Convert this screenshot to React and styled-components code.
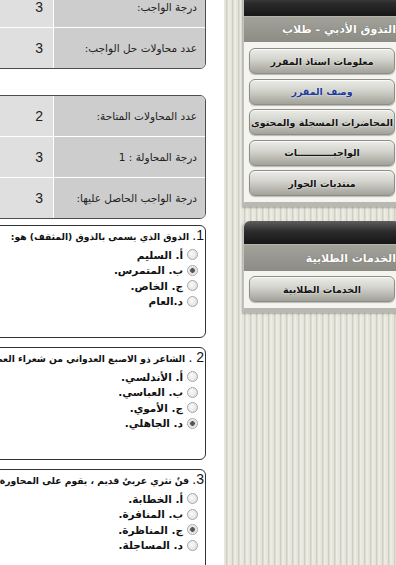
import React from "react";
import styled, { createGlobalStyle } from "styled-components";

const GlobalStyle = createGlobalStyle`
  html, body {
    margin: 0;
    padding: 0;
    background: #fff;
  }
  body {
    font-family: Tahoma, "DejaVu Sans", sans-serif;
  }
`;

const stats1 = [
  { label: "درجة الواجب:", value: "3" },
  { label: "عدد محاولات حل الواجب:", value: "3" },
];

const stats2 = [
  { label: "عدد المحاولات المتاحة:", value: "2" },
  { label: "درجة المحاولة : 1", value: "3" },
  { label: "درجة الواجب الحاصل عليها:", value: "3" },
];

const questions = [
  {
    num: "1.",
    text: " الذوق الذي يسمى بالذوق (المثقف) هو:",
    options: ["أ. السليم", "ب. المتمرس.", "ج. الخاص.", "د.العام"],
    checked: 1,
  },
  {
    num: "2 .",
    text: " الشاعر ذو الاصبع العدواني من شعراء العصر:",
    options: ["أ. الأندلسي.", "ب. العباسي.", "ج. الأموي.", "د. الجاهلي."],
    checked: 3,
  },
  {
    num: "3.",
    text: " فنٌ نثري عربيٌ قديم ، يقوم على المحاورة الفكرية بين طرفين:",
    options: ["أ. الخطابة.", "ب. المنافرة.", "ج. المناظرة.", "د. المساجلة."],
    checked: 2,
  },
];

const courseLinks = [
  "معلومات استاذ المقرر",
  "وصف المقرر",
  "المحاضرات المسجلة والمحتوى",
  "الواجبـــــــــــات",
  "منتديات الحوار",
];

function App() {
  return (
    <>
      <GlobalStyle />
      <Page>
        <Sidebar>
          <Panel $top={-8}>
            <PanelHead $h={24} />
            <PanelTitle>التذوق الأدبي - طلاب</PanelTitle>
            <PanelBody>
              {courseLinks.map((l, i) => (
                <NavButton key={l} $active={i === 1}>
                  {l}
                </NavButton>
              ))}
            </PanelBody>
          </Panel>
          <Panel $top={14}>
            <PanelHead $h={23} $round />
            <PanelTitle $h={27}>الخدمات الطلابية</PanelTitle>
            <PanelBody $pt={5}>
              <NavButton>الخدمات الطلابية</NavButton>
            </PanelBody>
          </Panel>
        </Sidebar>

        <Main>
          <StatBox $top={-14}>
            {stats1.map((s) => (
              <StatRow key={s.label}>
                <Label>{s.label}</Label>
                <Value>{s.value}</Value>
              </StatRow>
            ))}
          </StatBox>
          <StatBox $top={26}>
            {stats2.map((s) => (
              <StatRow key={s.label}>
                <Label>{s.label}</Label>
                <Value>{s.value}</Value>
              </StatRow>
            ))}
          </StatBox>

          {questions.map((q, qi) => (
            <QuestionBox key={q.num} $top={qi === 0 ? 6 : 9}>
              <QuestionText>
                <Num>{q.num}</Num>
                {q.text}
              </QuestionText>
              <Options>
                {q.options.map((o, oi) => (
                  <Option key={o}>
                    <Radio $on={oi === q.checked} />
                    {o}
                  </Option>
                ))}
              </Options>
            </QuestionBox>
          ))}
        </Main>
      </Page>
    </>
  );
}

export default App;

const Page = styled.div`
  width: 396px;
  height: 565px;
  overflow: hidden;
  display: flex;
  direction: rtl;
  background: #fff;
`;

const Main = styled.main`
  width: 224px;
  flex-shrink: 0;
  background: #fff;
`;

const Sidebar = styled.aside`
  width: 172px;
  flex-shrink: 0;
  padding-left: 19px;
  box-sizing: border-box;
  background: repeating-linear-gradient(
    90deg,
    #e5e5db 0px,
    #e5e5db 2px,
    #cfcfc4 2px,
    #cfcfc4 3px,
    #dcdcd2 3px,
    #dcdcd2 4px,
    #ecece4 4px,
    #ecece4 6px
  );
`;

const Panel = styled.section`
  margin-top: ${(p) => p.$top}px;
  margin-right: -4px;
  background: #f4f4f1;
  border-left: 1px solid #c4c4bc;
  border-bottom: 5px solid #b9b9b1;
  border-radius: 6px 6px 0 0;
  box-shadow: -1px 1px 2px rgba(0, 0, 0, 0.25);
`;

const PanelHead = styled.div`
  height: ${(p) => p.$h}px;
  border-radius: ${(p) => (p.$round ? "6px 6px 0 0" : "0")};
  background: linear-gradient(#5e5e5e, #2c2c2c 45%, #161616);
`;

const PanelTitle = styled.div`
  height: ${(p) => p.$h || 26}px;
  display: flex;
  align-items: center;
  padding-right: 4px;
  background: linear-gradient(#a2a29a, #8c8c84);
  border-top: 1px solid #b4b4ac;
  box-sizing: border-box;
  color: #fff;
  font-weight: bold;
  font-size: 11px;
  white-space: nowrap;
  text-shadow: 0 0 1px #55554f;
`;

const PanelBody = styled.div`
  display: flex;
  flex-direction: column;
  gap: 4.5px;
  padding: ${(p) => p.$pt || 6}px 5px 6px 5px;
`;

const NavButton = styled.div`
  height: 26px;
  box-sizing: border-box;
  display: flex;
  align-items: center;
  justify-content: center;
  border: 1px solid #8e8e86;
  border-radius: 6px;
  background: linear-gradient(#ecece8, #d6d6d0 40%, #bcbcb4 70%, #a2a29a);
  box-shadow: inset 0 1px 0 #fafaf8, 0 1px 1px rgba(0, 0, 0, 0.25);
  font-size: 9.5px;
  font-weight: bold;
  white-space: nowrap;
  color: ${(p) => (p.$active ? "#1c3a9c" : "#141414")};
  text-shadow: 0 0 2px #fff;
`;

const StatBox = styled.div`
  width: 260px;
  margin-right: 18px;
  margin-top: ${(p) => p.$top}px;
  border: 1px solid #4d4d4d;
  border-radius: 6px;
  overflow: hidden;
  background: #fff;
`;

const StatRow = styled.div`
  display: flex;
  height: 40px;
  & + & {
    border-top: 1px solid #fff;
  }
`;

const Label = styled.div`
  width: 152px;
  flex-shrink: 0;
  display: flex;
  align-items: center;
  padding-right: 8px;
  box-sizing: border-box;
  background: #cdcdcd;
  border-left: 1px solid #fff;
  font-size: 10.5px;
  color: #222;
  white-space: nowrap;
`;

const Value = styled.div`
  flex: 1;
  display: flex;
  align-items: center;
  padding-right: 10px;
  background: #dfdfdf;
  font-family: "Liberation Sans", Arial, sans-serif;
  font-size: 14px;
  color: #222;
`;

const QuestionBox = styled.div`
  width: 260px;
  height: 113px;
  box-sizing: border-box;
  margin-right: 18px;
  margin-top: ${(p) => p.$top}px;
  border: 1px solid #333;
  border-radius: 6px;
  background: #fff;
  overflow: hidden;
`;

const QuestionText = styled.div`
  height: 18px;
  line-height: 18px;
  padding-right: 1px;
  font-size: 9.2px;
  font-weight: bold;
  color: #111;
  white-space: nowrap;
`;

const Num = styled.span`
  font-family: "Liberation Sans", Arial, sans-serif;
  font-size: 14px;
  font-weight: normal;
`;

const Options = styled.div`
  padding: 3px 7px 0 0;
  display: flex;
  flex-direction: column;
`;

const Option = styled.div`
  height: 15.5px;
  display: flex;
  align-items: center;
  gap: 4px;
  font-size: 10.5px;
  font-weight: bold;
  color: #111;
  white-space: nowrap;
`;

const Radio = styled.span`
  width: 9px;
  height: 9px;
  flex-shrink: 0;
  border-radius: 50%;
  border: 1px solid #a6a6a6;
  background: ${(p) =>
    p.$on
      ? "radial-gradient(circle, #555 0 2px, #cfcfcf 2.5px, #f2f2f2 4px)"
      : "radial-gradient(circle at 40% 40%, #fafafa, #dadada)"};
`;
